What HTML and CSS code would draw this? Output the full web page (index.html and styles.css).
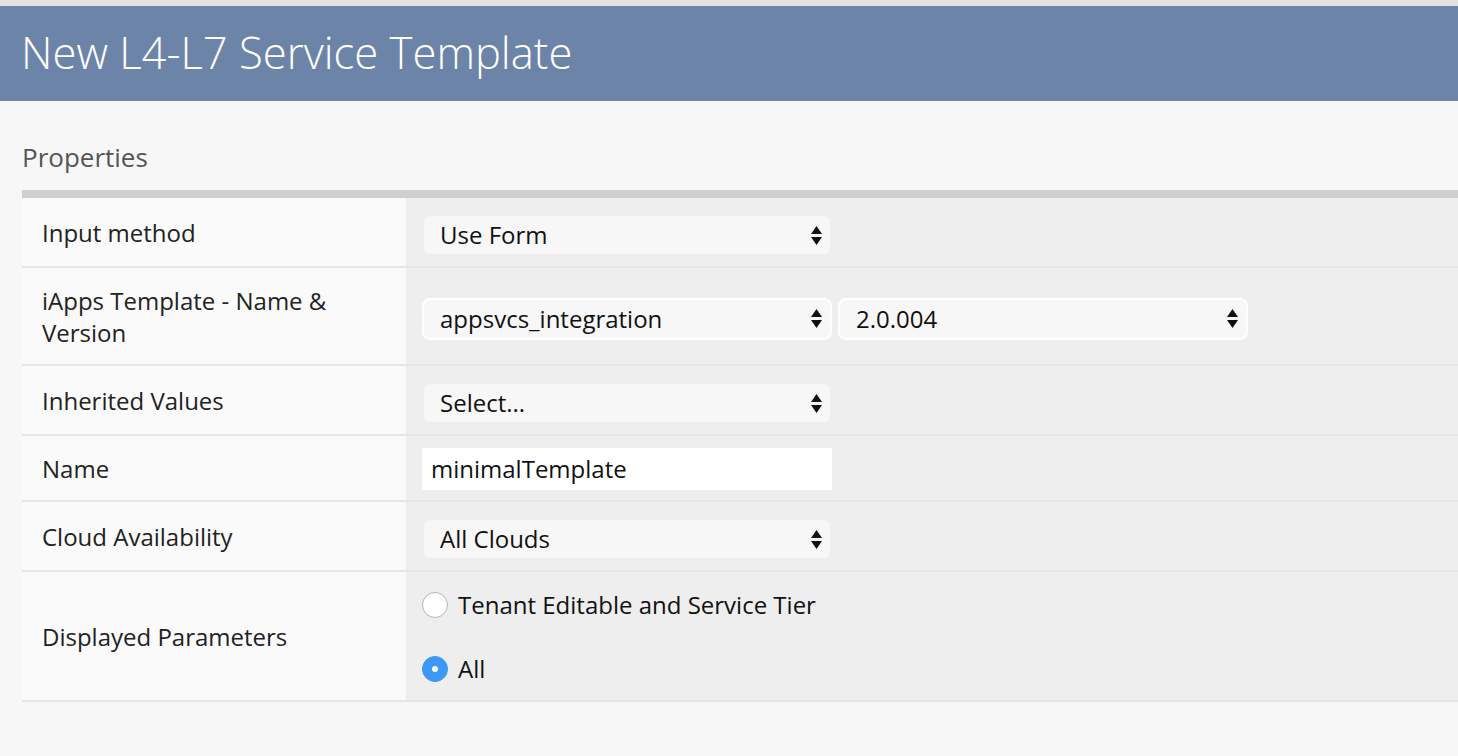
FILE: index.html
```html
<!DOCTYPE html>
<html>
<head>
<meta charset="utf-8">
<link rel="stylesheet" href="styles.css">
</head>
<body>
<div class="topstrip"></div>
<header class="header"><h1 class="title">New L4-L7 Service Template</h1></header>
<main class="content">
  <h2 class="section">Properties</h2>
  <div class="table">
    <div class="row r1">
      <div class="label">Input method</div>
      <div class="value">
        <div class="select">Use Form<svg class="arrows" width="11" height="19" viewBox="0 0 11 19"><path d="M5.5 0L11 8H0z M0 11h11L5.5 19z" fill="#111"/></svg></div>
      </div>
    </div>
    <div class="row r2">
      <div class="label">iApps Template - Name &amp;<br>Version</div>
      <div class="value">
        <div class="select bordered">appsvcs_integration<svg class="arrows" width="11" height="19" viewBox="0 0 11 19"><path d="M5.5 0L11 8H0z M0 11h11L5.5 19z" fill="#111"/></svg></div>
        <div class="select bordered">2.0.004<svg class="arrows" width="11" height="19" viewBox="0 0 11 19"><path d="M5.5 0L11 8H0z M0 11h11L5.5 19z" fill="#111"/></svg></div>
      </div>
    </div>
    <div class="row r3">
      <div class="label">Inherited Values</div>
      <div class="value">
        <div class="select">Select...<svg class="arrows" width="11" height="19" viewBox="0 0 11 19"><path d="M5.5 0L11 8H0z M0 11h11L5.5 19z" fill="#111"/></svg></div>
      </div>
    </div>
    <div class="row r4">
      <div class="label">Name</div>
      <div class="value value-input">
        <div class="input">minimalTemplate</div>
      </div>
    </div>
    <div class="row r5">
      <div class="label">Cloud Availability</div>
      <div class="value">
        <div class="select">All Clouds<svg class="arrows" width="11" height="19" viewBox="0 0 11 19"><path d="M5.5 0L11 8H0z M0 11h11L5.5 19z" fill="#111"/></svg></div>
      </div>
    </div>
    <div class="row r6">
      <div class="label">Displayed Parameters</div>
      <div class="value radios">
        <div class="radio-row"><span class="radio"></span><span>Tenant Editable and Service Tier</span></div>
        <div class="radio-row"><span class="radio checked"></span><span>All</span></div>
      </div>
    </div>
  </div>
</main>
</body>
</html>
```

FILE: styles.css
```css
html, body {
  margin: 0;
  padding: 0;
  background: #f7f7f7;
  font-family: "Open Sans", "Liberation Sans", sans-serif;
}
.topstrip {
  height: 6px;
  background: #e2e2e2;
}
.header {
  height: 95px;
  background: #6d84a9;
  display: flex;
  align-items: center;
  padding-left: 21px;
}
.title {
  margin: 0;
  font-weight: 300;
  font-size: 43.6px;
  line-height: 60px;
  color: #fff;
  position: relative;
  top: -2px;
}
.content {
  padding-left: 22px;
}
.section {
  margin: 0;
  box-sizing: border-box;
  height: 97px;
  padding-top: 37px;
  font-weight: 400;
  font-size: 26px;
  line-height: 38px;
  color: #555;
  border-bottom: 8px solid #cfcfcf;
}
.table {
  display: flex;
  flex-direction: column;
}
.row {
  display: flex;
  border-bottom: 2px solid #e6e6e6;
}
.r1 { height: 68px; }
.r2 { height: 96px; }
.r3 { height: 68px; }
.r4 { height: 64px; }
.r5 { height: 68px; }
.r6 { height: 128px; }
.label {
  width: 384px;
  flex: none;
  background: #fafafa;
  box-sizing: border-box;
  padding-left: 20px;
  padding-top: 2px;
  display: flex;
  align-items: center;
  font-size: 24px;
  line-height: 32px;
  color: #222;
}
.value {
  flex: 1;
  background: #eeeeee;
  display: flex;
  align-items: center;
  gap: 6px;
  padding-left: 16px;
  padding-top: 6px;
  box-sizing: border-box;
}
.value.value-input {
  padding-top: 2px;
}
.select {
  position: relative;
  width: 406px;
  height: 38px;
  margin-left: 2px;
  box-sizing: border-box;
  background: #f7f7f7;
  border-radius: 6px;
  padding-left: 16px;
  font-size: 24px;
  line-height: 38px;
  color: #111;
}
.select.bordered {
  margin-left: 0;
  width: 410px;
  height: 42px;
  border: 2px solid #fff;
  border-radius: 8px;
  line-height: 38px;
}
.arrows {
  position: absolute;
  right: 8px;
  top: 10px;
}
.select.bordered .arrows {
  right: 8px;
  top: 9px;
}
.input {
  width: 410px;
  height: 42px;
  box-sizing: border-box;
  background: #fff;
  padding-left: 9px;
  font-size: 24px;
  line-height: 42px;
  color: #111;
}
.value.radios {
  flex-direction: column;
  align-items: flex-start;
  justify-content: center;
  gap: 36px;
  padding-top: 2px;
}
.radio-row {
  display: flex;
  align-items: center;
  gap: 10px;
  font-size: 24px;
  line-height: 28px;
  color: #111;
}
.radio {
  width: 26px;
  height: 26px;
  box-sizing: border-box;
  border-radius: 50%;
  background: #fff;
  border: 1px solid #b5b5b5;
  position: relative;
}
.radio.checked {
  background: #3d97f4;
  border-color: #3d97f4;
}
.radio.checked::after {
  content: "";
  position: absolute;
  left: 9px;
  top: 9px;
  width: 6px;
  height: 6px;
  border-radius: 50%;
  background: #fff;
}
```
